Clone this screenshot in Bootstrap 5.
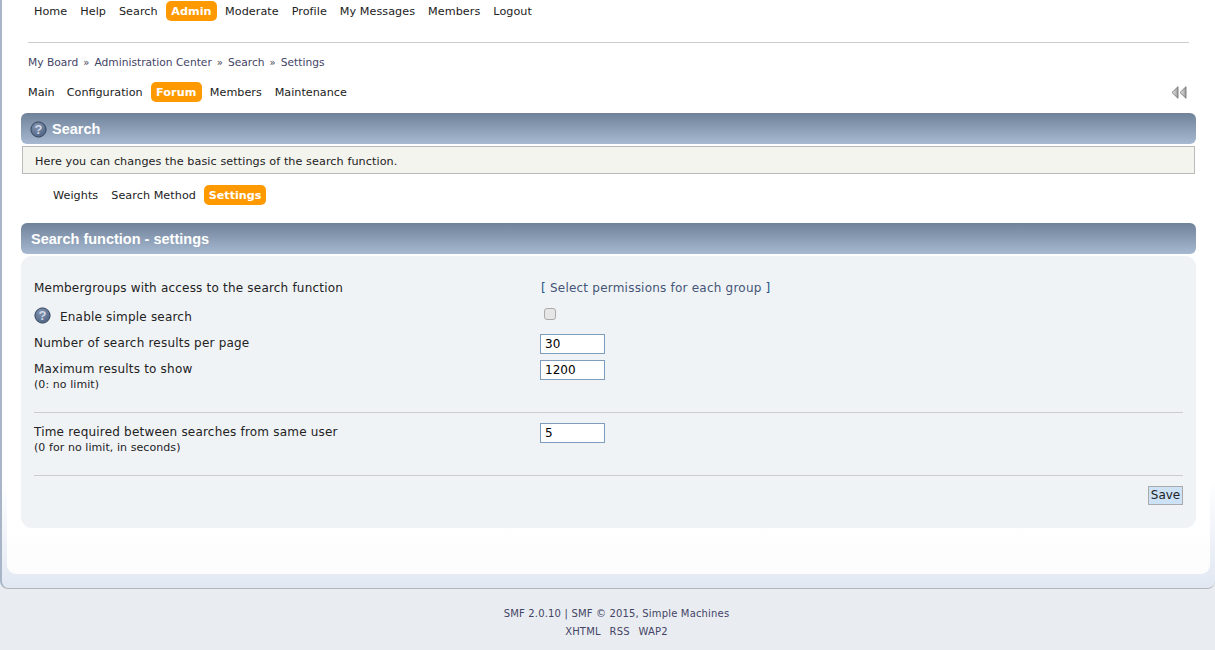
<!DOCTYPE html>
<html lang="en">
<head>
<meta charset="utf-8">
<title>Settings</title>
<link href="https://cdn.jsdelivr.net/npm/bootstrap@5.3.0/dist/css/bootstrap.min.css" rel="stylesheet">
<style>
html,body{height:650px;overflow:hidden}
body{background:#e9edf1;font-family:"DejaVu Sans","Liberation Sans",sans-serif;font-size:11.5px;color:#000;line-height:1.3}
a{color:#334466;text-decoration:none}
.frame-outer{height:589px;background:linear-gradient(#fff 0,#fff 480px,#e2e8f2 586px);border-left:2px solid #a7b5c7;border-bottom:1px solid #b5b5b5;border-bottom-left-radius:8px;border-bottom-right-radius:8px;padding:0 5px 14px 5px}
.frame-inner{height:100%;background:linear-gradient(#fff 0,#fff 520px,#fcfcfc 100%);border-radius:0 0 9px 9px;padding:0 14px}
.menu-link{color:#222;padding:0 5px;height:20px;line-height:22px;border-radius:5px;white-space:nowrap;font-size:11.2px}
.menu-link.on{background:#ff9900;color:#fff;font-weight:700;font-size:11.2px;letter-spacing:.05px}
.menu-top{height:22px;padding-left:8px;padding-top:1px;gap:3px}
.menu-top .menu-link{letter-spacing:.05px}
.menu-top .menu-link.on{padding:0 5.5px}
.rule-top{height:1px;background:#ccc;margin:20px 7px 0 7px}
.crumbs{margin:13px 0 0 7px;height:13px;line-height:13px;font-size:10.68px;white-space:nowrap}
.crumbs a{color:#444466}
.crumbs i{font-style:normal;margin:0 5px;font-size:10px;color:#445}
.nav-two{height:20px;margin-top:13px;padding-left:2px;gap:3px}
.nav-two .menu-link:first-child{margin-right:-1px}
.nav-two .menu-link.on{padding:0 5.5px}
.collapse-arrows{margin-left:auto;margin-right:9px;margin-top:4px}
.bar-title{height:31px;border-radius:6px;background:linear-gradient(#6f8299,#a7b9d0);color:#fff;font-weight:700;font-family:"Liberation Sans",Arial,sans-serif;font-size:14.5px;line-height:32px;padding-left:10px;white-space:nowrap}
.bar-first{margin-top:11px;padding-left:9px}
.bar-first svg{margin-right:5px;vertical-align:-4px}
.info-note{margin:2px 1px 0 1px;height:28px;background:#f3f4ee;border:1px solid #bbb;line-height:29px;padding-left:12px;font-size:11.2px;letter-spacing:.08px;color:#222}
.tabs-sub{height:20px;margin-top:11px;padding-left:27px;gap:3px}
.tabs-sub .menu-link{letter-spacing:.06px}
.tabs-sub .menu-link.on{letter-spacing:0;padding:0 4.3px;margin-left:.4px}
.bar-cat{margin-top:18px}
.win-body{height:272px;margin-top:2px;background:#f0f3f6;border-radius:11px;padding:22px 13px 0;font-size:12px;letter-spacing:.2px;color:#222}
.set-row{display:flex;color:#222}
.set-label{width:506px;flex:none;padding-top:2px}
.set-label small{display:block;font-size:11px;line-height:14px;letter-spacing:.07px}
.row-link{height:18px;line-height:20px}
.row-link .set-label{padding-top:0}
.row-link a{letter-spacing:.22px;color:#445577;padding-left:1px}
.row-link b{font-weight:400;color:#225588}
.row-check{height:20px;margin-top:10px}
.row-check .set-label{padding-top:0}
.row-check svg{align-self:flex-start;margin-top:1px}
.row-check .set-label span{margin-left:9px;padding-top:3px}
.row-num{height:20px;margin-top:8px}
.row-max{margin-top:6px;height:32px}
.set-input{width:65px;height:20px;border:1px solid #7e9dbd;background:#fff;padding:0 4px;font:12px "DejaVu Sans",sans-serif;color:#000;display:block;border-radius:0;outline:0}
.plain-check{appearance:none;-webkit-appearance:none;width:12px;height:12px;margin:2px 0 0 4px;border:1px solid #aaa;border-radius:3px;background:#e6e6e6;display:block}
.split-rule{height:1px;background:#ccc}
.rule-a{margin-top:20px}
.rule-b{margin-top:20px}
.row-time{margin-top:10px;height:32px}
.row-save{margin-top:10px}
.save-btn{width:35px;height:19px;padding:0;border:1px solid #aaa;background:#cde1f7;font:12px "DejaVu Sans",sans-serif;color:#222;line-height:15px}
.foot-text{font-size:10px;letter-spacing:.17px;color:#444466;line-height:18px;padding-top:16px;padding-left:18px}
.foot-text a{color:#444466}
.foot-gap{margin:0 2.75px}
</style>
</head>
<body>
<svg width="0" height="0" class="position-absolute"><defs>
<radialGradient id="gl" cx=".4" cy=".3" r=".8"><stop offset="0" stop-color="#8494b0"/><stop offset="1" stop-color="#4a5f80"/></radialGradient>
<linearGradient id="ar" x1="0" x2="1"><stop offset="0" stop-color="#eee"/><stop offset="1" stop-color="#999"/></linearGradient>
</defs></svg>
<div class="frame-outer">
 <div class="frame-inner">
  <div class="d-flex menu-top">
   <a class="menu-link" href="#">Home</a><a class="menu-link" href="#">Help</a><a class="menu-link" href="#">Search</a><a class="menu-link on" href="#">Admin</a><a class="menu-link" href="#">Moderate</a><a class="menu-link" href="#">Profile</a><a class="menu-link" href="#">My Messages</a><a class="menu-link" href="#">Members</a><a class="menu-link" href="#">Logout</a>
  </div>
  <div class="rule-top"></div>
  <div class="crumbs"><a href="#">My Board</a><i>»</i><a href="#">Administration Center</a><i>»</i><a href="#">Search</a><i>»</i><a href="#">Settings</a></div>
  <div class="d-flex nav-two">
   <a class="menu-link" href="#">Main</a><a class="menu-link" href="#">Configuration</a><a class="menu-link on" href="#">Forum</a><a class="menu-link" href="#">Members</a><a class="menu-link" href="#">Maintenance</a>
   <svg class="collapse-arrows" width="16" height="13" viewBox="0 0 16 13"><path d="M7 .7V12.3L1 6.5Z" fill="url(#ar)" stroke="#777" stroke-width=".9"/><path d="M15 .7V12.3L9 6.5Z" fill="url(#ar)" stroke="#777" stroke-width=".9"/></svg>
  </div>
  <div class="bar-title bar-first"><svg width="17" height="17" viewBox="0 0 17 17"><circle cx="8.5" cy="8.5" r="7.6" fill="url(#gl)" stroke="#34465f" stroke-width="1"/><text x="8.5" y="13" text-anchor="middle" font-size="13" font-weight="700" font-family="Liberation Sans" fill="#cfd8e6">?</text></svg>Search</div>
  <div class="info-note">Here you can changes the basic settings of the search function.</div>
  <div class="d-flex tabs-sub">
   <a class="menu-link" href="#">Weights</a><a class="menu-link" href="#">Search Method</a><a class="menu-link on" href="#">Settings</a>
  </div>
  <div class="bar-title bar-cat">Search function - settings</div>
  <div class="win-body">
   <div class="set-row row-link"><div class="set-label">Membergroups with access to the search function</div><a href="#"><b>[</b> Select permissions for each group <b>]</b></a></div>
   <div class="set-row row-check"><div class="set-label d-flex align-items-center"><svg width="17" height="17" viewBox="0 0 17 17"><circle cx="8.5" cy="8.5" r="7.6" fill="url(#gl)" stroke="#34465f" stroke-width="1"/><text x="8.5" y="13" text-anchor="middle" font-size="13" font-weight="700" font-family="Liberation Sans" fill="#cfd8e6">?</text></svg><span>Enable simple search</span></div><input type="checkbox" class="plain-check"></div>
   <div class="set-row row-num"><div class="set-label">Number of search results per page</div><input class="set-input" value="30"></div>
   <div class="set-row row-max"><div class="set-label">Maximum results to show<small>(0: no limit)</small></div><input class="set-input" value="1200"></div>
   <div class="split-rule rule-a"></div>
   <div class="set-row row-time"><div class="set-label">Time required between searches from same user<small>(0 for no limit, in seconds)</small></div><input class="set-input" value="5"></div>
   <div class="split-rule rule-b"></div>
   <div class="d-flex justify-content-end row-save"><button class="save-btn" type="button">Save</button></div>
  </div>
 </div>
</div>
<div class="foot-text text-center">
 <div><a href="#">SMF 2.0.10 | SMF © 2015, Simple Machines</a></div>
 <div><a href="#">XHTML</a><span class="foot-gap"></span> <a href="#">RSS</a><span class="foot-gap"></span> <a href="#">WAP2</a></div>
</div>
</body>
</html>
